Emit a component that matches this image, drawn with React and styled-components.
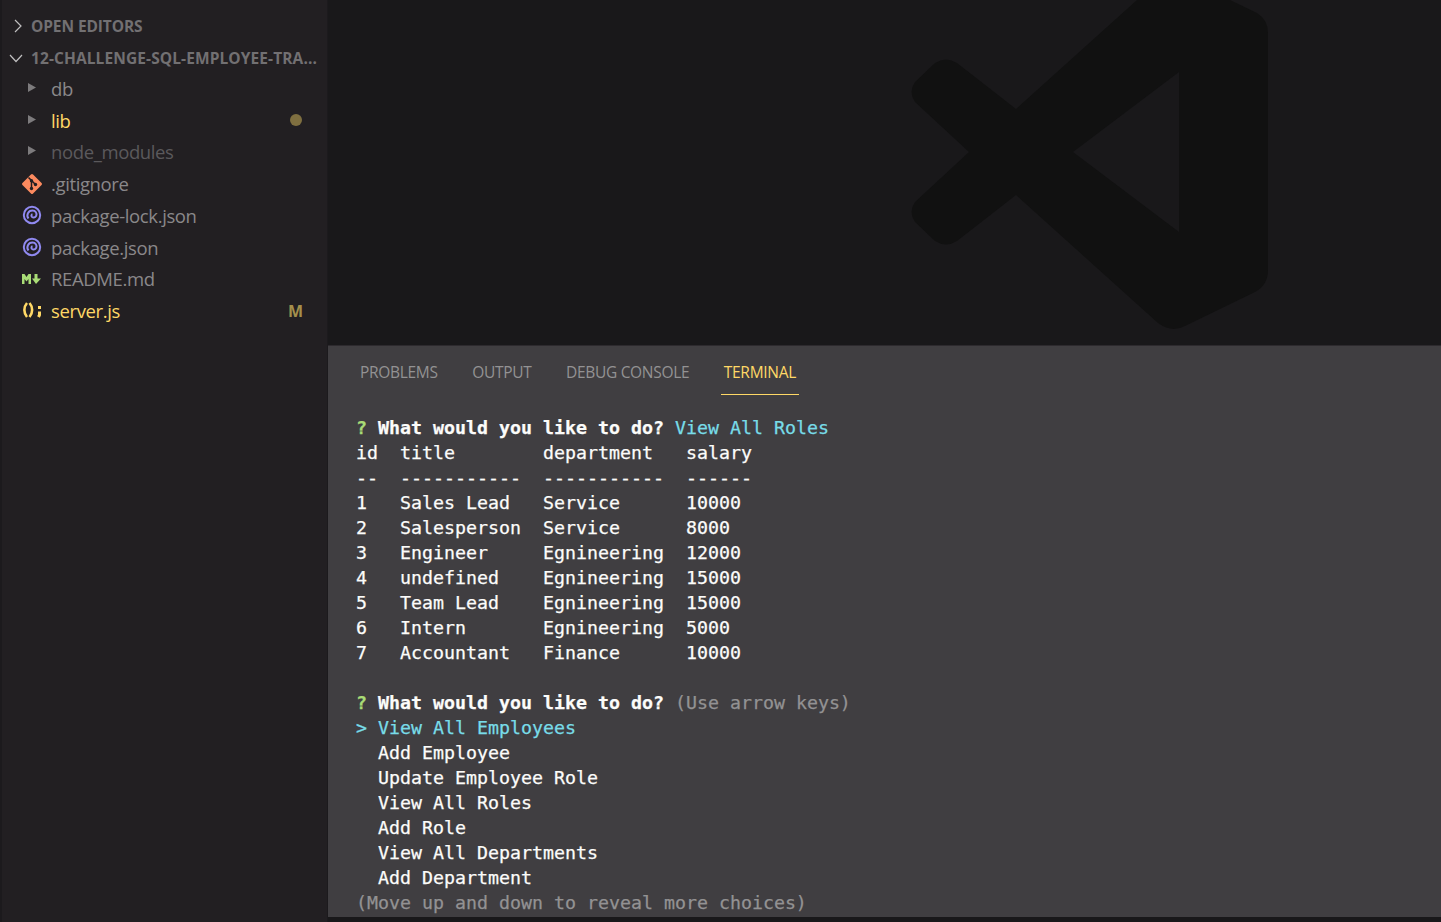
import React from 'react';
import styled, { createGlobalStyle } from 'styled-components';

const GlobalStyle = createGlobalStyle`
  html, body {
    margin: 0;
    padding: 0;
    background: #19181a;
    overflow: hidden;
  }
`;

const Window = styled.div`
  display: flex;
  width: 1441px;
  height: 922px;
  overflow: hidden;
  font-family: "Open Sans", "Noto Sans", sans-serif;
`;

const Sidebar = styled.div`
  width: 328px;
  flex: none;
  padding-top: 10px;
  box-sizing: border-box;
  background: #221f22;
  border-left: 2px solid #1c1a1d;
  border-right: 1px solid #1c1a1d;
`;

const Header = styled.div`
  display: flex;
  align-items: center;
  box-sizing: border-box;
  height: ${props => props.$height}px;
  padding-top: ${props => props.$top || 0}px;
  padding-left: ${props => props.$indent}px;
  color: #727072;
  font-size: 15.5px;
  font-weight: 700;
  letter-spacing: ${props => props.$spacing}px;
  white-space: nowrap;
  svg {
    flex: none;
    width: 16px;
    height: 16px;
    margin-right: ${props => props.$gap}px;
  }
`;

const Row = styled.div`
  display: flex;
  align-items: center;
  height: 31.7px;
  padding-left: 18px;
  padding-right: 25px;
  font-size: 18.5px;
  letter-spacing: -0.38px;
  color: ${props => props.$color || '#8a888a'};
`;

const RowIcon = styled.span`
  display: flex;
  align-items: center;
  justify-content: center;
  flex: none;
  width: 23px;
  height: 22px;
  margin-right: 8px;
`;

const RowName = styled.span`
  flex: 1;
`;

const Dot = styled.span`
  width: 12px;
  height: 12px;
  margin-top: -1px;
  border-radius: 50%;
  background: #7f6f40;
`;

const Badge = styled.span`
  margin-top: 1px;
  margin-right: -1px;
  font-size: 16px;
  font-weight: 700;
  letter-spacing: 0;
  color: #a48f4c;
`;

const Main = styled.div`
  flex: 1;
  display: flex;
  flex-direction: column;
  min-width: 0;
`;

const Editor = styled.div`
  height: 345px;
  flex: none;
  display: flex;
  justify-content: flex-end;
  padding-right: 161px;
  box-sizing: border-box;
  background: #19181a;
  overflow: hidden;
`;

const Watermark = styled.svg`
  width: 380px;
  height: 340px;
  flex: none;
`;

const Panel = styled.div`
  flex: 1;
  background: #403e41;
  border-top: 1px solid #2d2a2e;
  margin-bottom: 5px;
`;

const Tabs = styled.div`
  display: flex;
  gap: 28.5px;
  height: 49px;
  padding-left: 29px;
`;

const Tab = styled.div`
  display: flex;
  align-items: center;
  box-sizing: border-box;
  height: 49px;
  padding: 4px 3px 0;
  font-size: 15.5px;
  letter-spacing: -0.3px;
  color: ${props => (props.$active ? '#ffd866' : '#939293')};
  border-bottom: 1px solid ${props => (props.$active ? '#ffd866' : 'transparent')};
`;

const Terminal = styled.div`
  padding: 20px 0 0 28px;
  font-family: "DejaVu Sans Mono", monospace;
  font-size: 18.27px;
  line-height: 25px;
  color: #fcfcfa;
  white-space: pre;
  -webkit-text-stroke: 0.25px currentColor;
`;

const Line = styled.div`
  height: 25px;
`;

const Ink = styled.span`
  color: ${props => props.$color || 'inherit'};
  font-weight: ${props => (props.$bold ? 700 : 400)};
`;

const ArrowMark = styled.svg`
  margin-top: -2px;
`;

const ScriptMark = styled.svg`
  margin-left: 2px;
`;

const Chevron = ({ open }) => (
  <svg viewBox="0 0 16 16" fill="none" stroke="#c0bfc0" strokeWidth="1.2">
    <path d={open ? 'M2 5l6 6.5L14 5' : 'M5 2l6 6-6 6'} />
  </svg>
);

const FolderArrow = () => (
  <ArrowMark width="10" height="11" viewBox="0 0 10 11">
    <path d="M1 1l8 4.500L1 10z" fill="#7d7b7d" />
  </ArrowMark>
);

const GitIcon = () => (
  <svg width="22" height="22" viewBox="0 0 22 22">
    <rect x="3.500" y="3.500" width="15" height="15" rx="1.500" transform="rotate(45 11 11)" fill="#fc8a5f" />
    <path d="M7.500 4.500l7 7M10.500 7.500v8" stroke="#221f22" strokeWidth="1.500" fill="none" />
    <circle cx="10.500" cy="7.800" r="1.700" fill="#221f22" />
    <circle cx="14.500" cy="11.500" r="1.700" fill="#221f22" />
    <circle cx="10.500" cy="15.500" r="1.700" fill="#221f22" />
  </svg>
);

const PackageIcon = () => (
  <svg width="20" height="20" viewBox="0 0 20 20" fill="none" stroke="#9089f0" strokeWidth="2">
    <circle cx="10" cy="10" r="8.200" />
    <path d="M6.500 13.500c-2.500-3-.5-8 4-8 3 0 4.800 2.800 3.700 5.300-.9 2-3.800 2.200-4.600.6-.4-.9 0-1.900.9-2.100" />
  </svg>
);

const MarkdownIcon = () => (
  <svg width="19" height="10" viewBox="0 0 19 10">
    <path d="M0 10V0h2.500L4.500 3l2-3H9v10H6.500V5L4.500 7.500 2.500 5v5z" fill="#a9dc76" />
    <path d="M12.500 0h3v4.500H19L14 10 10 4.500h2.500z" fill="#a9dc76" />
  </svg>
);

const ScriptIcon = () => (
  <ScriptMark width="21" height="16" viewBox="0 0 21 16" fill="none" stroke="#ffd866" strokeWidth="2.600">
    <path d="M5 1C1.500 5 1.500 11 5 15M7.500 1c3.500 4 3.500 10 0 14" />
    <path d="M17.500 4v3M17.500 9.500v3.500l-1 2" strokeWidth="3" />
  </ScriptMark>
);

const VsLogo = () => (
  <Watermark viewBox="900 0 380 340">
    <path
      fillRule="evenodd"
      fill="#111111"
      d="M1137 0L1016 109L957 63Q946 56 935 63L915 82Q908 92 915 102L969 152L915 202Q908 212 915 222L935 241Q946 248 957 241L1016 195L1158 323Q1172 333 1185 326L1255 292Q1268 285 1268 270V33Q1268 20 1257 13L1230 0ZM1179 72L1073 152L1179 232Z"
    />
  </Watermark>
);

const files = [
  { name: 'db', icon: <FolderArrow /> },
  { name: 'lib', icon: <FolderArrow />, color: '#ffd866', mark: <Dot /> },
  { name: 'node_modules', icon: <FolderArrow />, color: '#5b595c' },
  { name: '.gitignore', icon: <GitIcon /> },
  { name: 'package-lock.json', icon: <PackageIcon /> },
  { name: 'package.json', icon: <PackageIcon /> },
  { name: 'README.md', icon: <MarkdownIcon /> },
  { name: 'server.js', icon: <ScriptIcon />, color: '#ffd866', mark: <Badge>M</Badge> }
];

const tabs = ['PROBLEMS', 'OUTPUT', 'DEBUG CONSOLE', 'TERMINAL'];

const table = [
  'id  title        department   salary',
  '--  -----------  -----------  ------',
  '1   Sales Lead   Service      10000',
  '2   Salesperson  Service      8000',
  '3   Engineer     Egnineering  12000',
  '4   undefined    Egnineering  15000',
  '5   Team Lead    Egnineering  15000',
  '6   Intern       Egnineering  5000',
  '7   Accountant   Finance      10000'
];

const choices = [
  'Add Employee',
  'Update Employee Role',
  'View All Roles',
  'Add Role',
  'View All Departments',
  'Add Department'
];

const Prompt = ({ children }) => (
  <Line>
    <Ink $color="#a9dc76" $bold>? </Ink>
    <Ink $bold>What would you like to do? </Ink>
    {children}
  </Line>
);

const App = () => {
  return (
    <Window>
      <GlobalStyle />
      <Sidebar>
        <Header $indent={8} $gap={5} $height={32} $spacing={-0.1}>
          <Chevron />
          OPEN EDITORS
        </Header>
        <Header $indent={6} $gap={7} $height={30.75} $top={1.5} $spacing={0.1}>
          <Chevron open />
          12-CHALLENGE-SQL-EMPLOYEE-TRA...
        </Header>
        {files.map(file => (
          <Row key={file.name} $color={file.color}>
            <RowIcon>{file.icon}</RowIcon>
            <RowName>{file.name}</RowName>
            {file.mark}
          </Row>
        ))}
      </Sidebar>
      <Main>
        <Editor>
          <VsLogo />
        </Editor>
        <Panel>
          <Tabs>
            {tabs.map(tab => (
              <Tab key={tab} $active={tab === 'TERMINAL'}>{tab}</Tab>
            ))}
          </Tabs>
          <Terminal>
            <Prompt><Ink $color="#78dce8">View All Roles</Ink></Prompt>
            {table.map(line => (
              <Line key={line}>{line}</Line>
            ))}
            <Line />
            <Prompt><Ink $color="#939293">(Use arrow keys)</Ink></Prompt>
            <Line><Ink $color="#78dce8">{'> View All Employees'}</Ink></Line>
            {choices.map(choice => (
              <Line key={choice}>{'  ' + choice}</Line>
            ))}
            <Line><Ink $color="#939293">(Move up and down to reveal more choices)</Ink></Line>
          </Terminal>
        </Panel>
      </Main>
    </Window>
  );
};

export default App;
